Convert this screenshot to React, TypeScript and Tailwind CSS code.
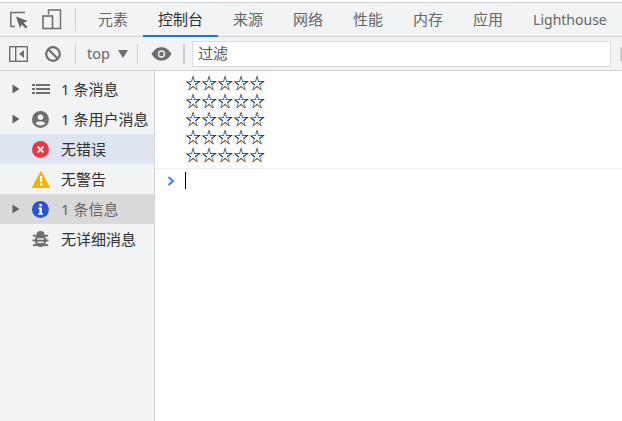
import React from "react";

const tabs = ["元素", "控制台", "来源", "网络", "性能", "内存", "应用", "Lighthouse"];
const stars = "☆☆☆☆☆\n☆☆☆☆☆\n☆☆☆☆☆\n☆☆☆☆☆\n☆☆☆☆☆";

function Arrow() {
  return (
    <svg width="8" height="10" viewBox="0 0 8 10" className="shrink-0">
      <path d="M0.5 0.5 L7.5 5 L0.5 9.5 Z" fill="#5f6368" />
    </svg>
  );
}

function ListIcon() {
  return (
    <svg width="18" height="12" viewBox="0 0 18 12">
      <g fill="#6e6e6e">
        <rect x="0" y="1" width="3" height="2" />
        <rect x="4" y="1" width="14" height="2" />
        <rect x="0" y="5" width="3" height="2" />
        <rect x="4" y="5" width="14" height="2" />
        <rect x="0" y="9" width="3" height="2" />
        <rect x="4" y="9" width="14" height="2" />
      </g>
    </svg>
  );
}

function UserIcon() {
  return (
    <svg width="17" height="17" viewBox="0 0 18 18">
      <circle cx="9" cy="9" r="9" fill="#6e6e6e" />
      <circle cx="9" cy="6.6" r="2.9" fill="#f1f3f4" />
      <path d="M3.8 13 C4.6 10.6 13.4 10.6 14.2 13 C13 14.6 11 15.4 9 15.4 C7 15.4 5 14.6 3.8 13 Z" fill="#f1f3f4" />
    </svg>
  );
}

function ErrorIcon() {
  return (
    <svg width="17" height="17" viewBox="0 0 18 18">
      <circle cx="9" cy="9" r="9" fill="#ee3545" />
      <path d="M6 6 L12 12 M12 6 L6 12" stroke="#fff" strokeWidth="2" />
    </svg>
  );
}

function WarnIcon() {
  return (
    <svg width="18" height="17" viewBox="0 0 18 17">
      <path d="M9 0.5 L17.6 16.5 H0.4 Z" fill="#f4b400" stroke="#f4b400" strokeLinejoin="round" />
      <rect x="8" y="5" width="2.2" height="6" fill="#fff" />
      <rect x="8" y="12.2" width="2.2" height="2.2" fill="#fff" />
    </svg>
  );
}

function InfoIcon() {
  return (
    <svg width="17" height="17" viewBox="0 0 18 18">
      <circle cx="9" cy="9" r="9" fill="#2a55d0" />
      <rect x="7.8" y="3.2" width="2.6" height="2.4" fill="#fff" />
      <path d="M6.8 7 H10.4 V13 H11.6 V14.6 H6.6 V13 H7.9 V8.6 H6.8 Z" fill="#fff" />
    </svg>
  );
}

function BugIcon() {
  return (
    <svg width="17" height="18" viewBox="0 0 18 18">
      <g fill="#6e6e6e">
        <ellipse cx="9" cy="10.5" rx="6" ry="7" />
        <ellipse cx="9" cy="3.5" rx="4" ry="3" />
        <rect x="1" y="4.5" width="16" height="2" />
        <rect x="0.5" y="9.5" width="17" height="2" />
        <rect x="1" y="14.5" width="16" height="2" />
      </g>
      <rect x="5.5" y="8.2" width="7" height="1.5" fill="#f1f3f4" />
      <rect x="5.5" y="11.8" width="7" height="1.5" fill="#f1f3f4" />
    </svg>
  );
}

function Row({ arrow, icon, label, cls = "", text = "text-[#303030]" }: { arrow?: boolean; icon: React.ReactNode; label: string; cls?: string; text?: string }) {
  return (
    <div className={`flex h-[30px] items-center ${cls}`}>
      <div className="flex w-[32px] shrink-0 justify-start pl-3">{arrow && <Arrow />}</div>
      <div className="flex w-[29px] shrink-0 items-center justify-start">{icon}</div>
      <span className={`whitespace-nowrap text-[15px] leading-none ${text}`}>{label}</span>
    </div>
  );
}

export default function App() {
  return (
    <div className="flex h-[421px] w-[622px] flex-col overflow-hidden bg-white font-['Noto_Sans','Noto_Sans_CJK_SC',sans-serif]">
      <div className="h-[2px] shrink-0 bg-white" />
      <div className="flex h-[35px] shrink-0 items-stretch border-y border-[#cfd1d4] bg-[#f1f3f4]">
        <div className="flex w-[75px] shrink-0 items-center pl-[10px]">
          <svg width="18" height="18" viewBox="0 0 18 18" className="shrink-0">
            <path d="M15 1.5 H0.8 V15.5 H5" fill="none" stroke="#6e6e6e" strokeWidth="1.5" />
            <path d="M6 5.5 L17.5 10 L13.5 12 L17.5 15.8 L15.6 17.6 L11.8 13.6 L10 17 Z" fill="#f1f3f4" stroke="#f1f3f4" strokeWidth="2" />
            <path d="M6 5.5 L17.5 10 L13.5 12 L17.5 15.8 L15.6 17.6 L11.8 13.6 L10 17 Z" fill="#5f6368" />
          </svg>
          <svg width="20" height="21" viewBox="0 0 20 21" className="ml-[14px] shrink-0">
            <path d="M6.5 5.5 V1 H18.5 V19.5 H11" fill="none" stroke="#6e6e6e" strokeWidth="1.4" />
            <rect x="1" y="7" width="9.5" height="12.5" fill="none" stroke="#6e6e6e" strokeWidth="1.6" />
          </svg>
        </div>
        <div className="my-[5px] w-px shrink-0 bg-[#ccc]" />
        <div className="ml-[7px] flex items-stretch">
          {tabs.map((t) => (
            <div
              key={t}
              className={
                "flex items-center whitespace-nowrap px-[15px] leading-none " +
                (t === "Lighthouse" ? "text-[14px] " : "text-[15px] ") +
                (t === "控制台"
                  ? "mb-[-1px] border-b-2 border-[#1a73e8] pt-[1px] text-[#303030]"
                  : "text-[#666]")
              }
            >
              {t}
            </div>
          ))}
        </div>
      </div>
      <div className="flex h-[34px] shrink-0 items-center border-b border-[#cfd1d4] bg-[#f1f3f4] pl-[9px]">
        <svg width="19" height="18" viewBox="0 0 19 18" className="shrink-0">
          <rect x="0.7" y="1.7" width="17.6" height="14.6" fill="none" stroke="#6e6e6e" strokeWidth="1.4" />
          <rect x="6" y="2" width="1.4" height="14" fill="#6e6e6e" />
          <path d="M15 5 V13 L10 9 Z" fill="#6e6e6e" />
        </svg>
        <svg width="18" height="18" viewBox="0 0 18 18" className="ml-[16px] shrink-0">
          <circle cx="9" cy="9" r="6.8" fill="none" stroke="#6e6e6e" strokeWidth="2.2" />
          <path d="M4.2 4.2 L13.8 13.8" stroke="#6e6e6e" strokeWidth="2.2" />
        </svg>
        <div className="ml-[13px] h-[20px] w-px shrink-0 bg-[#ccc]" />
        <div className="flex w-[61px] shrink-0 items-center pl-[11px]">
          <span className="text-[14.5px] leading-none text-[#666]">top</span>
          <svg width="10" height="8" viewBox="0 0 10 8" className="ml-[8px] shrink-0">
            <path d="M0 0 H10 L5 8 Z" fill="#6e6e6e" />
          </svg>
        </div>
        <div className="h-[20px] w-px shrink-0 bg-[#ccc]" />
        <svg width="21" height="14" viewBox="0 0 22 14" className="ml-[13px] shrink-0">
          <path d="M0.5 7 C4 1.5 7.5 0 11 0 C14.5 0 18 1.5 21.5 7 C18 12.5 14.5 14 11 14 C7.5 14 4 12.5 0.5 7 Z" fill="#6e6e6e" />
          <circle cx="11" cy="7" r="3.8" fill="#f1f3f4" />
          <circle cx="11" cy="7" r="2.4" fill="#6e6e6e" />
        </svg>
        <div className="ml-[11px] h-[20px] w-[2px] shrink-0 bg-[#ccc]" />
        <div className="ml-[7px] flex h-[26px] w-[419px] shrink-0 items-center border border-[#dadce0] bg-white pl-[5px] text-[15px] leading-none text-[#555]">
          过滤
        </div>
        <div className="ml-[9px] h-[14px] w-[3px] shrink-0 bg-[#d0d0d0]" />
      </div>
      <div className="flex min-h-0 flex-1">
        <div className="w-[155px] shrink-0 border-r border-[#d3d6da] bg-[#f1f3f4] pt-[3px]">
          <Row arrow icon={<ListIcon />} label="1 条消息" />
          <Row arrow icon={<UserIcon />} label="1 条用户消息" />
          <Row icon={<ErrorIcon />} label="无错误" cls="bg-[#dee5f0]" />
          <Row icon={<WarnIcon />} label="无警告" />
          <Row arrow icon={<InfoIcon />} label="1 条信息" cls="bg-[#d9d9d9]" text="text-[#666]" />
          <Row icon={<BugIcon />} label="无详细消息" />
        </div>
        <div className="min-w-0 flex-1">
          <div className="whitespace-pre-line border-b border-[#eeeeee] pb-[5px] pl-[30px] pt-[2px] font-['Noto_Sans_CJK_SC',sans-serif] text-[16px] leading-[18px] text-black">
            {stars}
          </div>
          <div className="flex items-center pl-[12px] pt-[3px]">
            <svg width="8" height="10" viewBox="0 0 8 10" className="shrink-0">
              <path d="M1.5 1 L6 5 L1.5 9" fill="none" stroke="#3b82f6" strokeWidth="2" />
            </svg>
            <div className="ml-[10px] h-[17px] w-px bg-black" />
          </div>
        </div>
      </div>
    </div>
  );
}
